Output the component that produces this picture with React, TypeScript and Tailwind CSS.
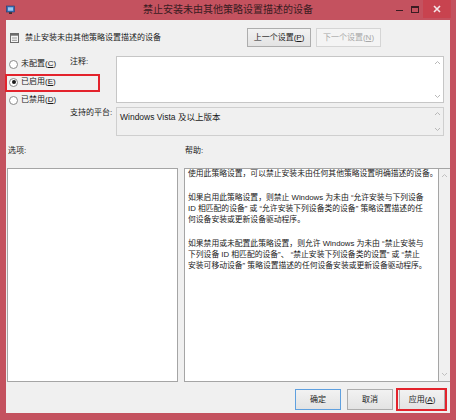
import React from "react";

const FONT = { fontFamily: '"Liberation Sans", "Noto Sans CJK SC", sans-serif' };

const helpLines = [
  "使用此策略设置，可以禁止安装未由任何其他策略设置明确描述的设备。",
  "",
  "如果启用此策略设置，则禁止 Windows 为未由 “允许安装与下列设备",
  "ID 相匹配的设备” 或 “允许安装下列设备类的设备” 策略设置描述的任",
  "何设备安装或更新设备驱动程序。",
  "",
  "如果禁用或未配置此策略设置，则允许 Windows 为未由 “禁止安装与",
  "下列设备 ID 相匹配的设备”、 “禁止安装下列设备类的设置” 或 “禁止",
  "安装可移动设备” 策略设置描述的任何设备安装或更新设备驱动程序。",
];

function Radio({ label, checked }: { label: React.ReactNode; checked?: boolean }) {
  return (
    <div className="flex items-center gap-[3px] h-[18px]">
      <span className="w-[9px] h-[9px] rounded-full border border-[#8a8a8a] bg-white flex items-center justify-center">
        {checked && <span className="w-[4px] h-[4px] rounded-full bg-[#1a1a1a]" />}
      </span>
      <span>{label}</span>
    </div>
  );
}

function ScrollArrows() {
  return (
    <div className="flex flex-col justify-between items-center w-[12px] py-[3px] text-[#b8b8b8]">
      <svg width="7" height="5" viewBox="0 0 7 5">
        <path d="M1 4 L3.5 1.5 L6 4" fill="none" stroke="currentColor" strokeWidth="1" />
      </svg>
      <svg width="7" height="5" viewBox="0 0 7 5">
        <path d="M1 1 L3.5 3.5 L6 1" fill="none" stroke="currentColor" strokeWidth="1" />
      </svg>
    </div>
  );
}

function Btn({
  children,
  disabled,
  primary,
  w,
  h = "h-[20px]",
}: {
  children: React.ReactNode;
  disabled?: boolean;
  primary?: boolean;
  w: string;
  h?: string;
}) {
  return (
    <div
      className={`${w} ${h} flex items-center justify-center border bg-gradient-to-b from-[#f2f2f2] to-[#e3e3e3] ${
        primary ? "border-[#5fa0df]" : disabled ? "border-[#d5d5d5] from-[#f4f4f4] to-[#f4f4f4]" : "border-[#adadad]"
      } ${disabled ? "text-[#a8a8a8]" : "text-[#1a1a1a]"}`}
    >
      {children}
    </div>
  );
}

export default function App() {
  return (
    <div
      className="w-[456px] h-[420px] bg-[#c4525f] flex flex-col text-[8px] text-[#1a1a1a] overflow-hidden"
      style={FONT}
    >
      {/* title bar */}
      <div className="h-[20px] flex items-center relative">
        <svg className="ml-[6px]" width="10" height="10" viewBox="0 0 10 10">
          <rect x="0.5" y="1" width="8" height="6" fill="#3a6fb8" stroke="#1f3f70" strokeWidth="0.6" />
          <rect x="2" y="2.3" width="5" height="3.4" fill="#9cc7f0" />
          <rect x="3" y="7.3" width="3" height="1.6" fill="#2b2b2b" />
        </svg>
        <div className="absolute left-0 right-0 text-center text-[10px] text-[#3a1c22] leading-[20px]">
          禁止安装未由其他策略设置描述的设备
        </div>
        <div className="ml-auto flex items-center h-[18px] self-start relative">
          <div className="w-[16px] flex justify-center">
            <span className="block w-[7px] h-[1.5px] bg-[#3a1c22] mt-[3px]" />
          </div>
          <div className="w-[16px] flex justify-center">
            <span className="block w-[8px] h-[7px] border border-[#3a1c22] border-t-2" />
          </div>
          <div className="w-[28px] h-[18px] bg-[#c8434f] flex items-center justify-center mr-[5px]">
            <svg width="8" height="8" viewBox="0 0 8 8">
              <path d="M1 1 L7 7 M7 1 L1 7" stroke="#f5e6e8" strokeWidth="1.6" />
            </svg>
          </div>
        </div>
      </div>

      {/* client area */}
      <div className="ml-[6px] w-[444px] h-[393px] bg-[#f0f0f0] relative">
        {/* header row */}
        <div className="flex items-center pt-[8px] h-[27px]">
          <svg className="ml-[4px]" width="9" height="10" viewBox="0 0 9 10">
            <rect x="0.5" y="0.5" width="8" height="9" fill="#f4f4f4" stroke="#6b6b6b" />
            <rect x="0.5" y="0.5" width="8" height="2.2" fill="#6b6b6b" />
            <rect x="2" y="4.5" width="5" height="1" fill="#9a9a9a" />
            <rect x="2" y="6.8" width="5" height="1" fill="#9a9a9a" />
          </svg>
          <span className="ml-[6px]">禁止安装未由其他策略设置描述的设备</span>
          <div className="ml-auto mr-[69px] flex gap-[5px]">
            <Btn w="w-[64px]" h="h-[19px]">
              上一个设置(<u>P</u>)
            </Btn>
            <Btn w="w-[65px]" h="h-[19px]" disabled>
              下一个设置(<u>N</u>)
            </Btn>
          </div>
        </div>

        {/* state + comment + platform */}
        <div className="flex mt-[9px]">
          <div className="w-[64px] pl-[3px] flex flex-col -mt-[1px]">
            <Radio label={<>未配置(<u>C</u>)</>} />
            <Radio label={<>已启用(<u>E</u>)</>} checked />
            <Radio label={<>已禁用(<u>D</u>)</>} />
          </div>
          <div className="w-[46px] flex flex-col">
            <div className="h-[51px]">注释:</div>
            <div>支持的平台:</div>
          </div>
          <div className="w-[328px] flex flex-col gap-[4px]">
            <div className="h-[47px] bg-white border border-[#c6c6c6] flex justify-end">
              <ScrollArrows />
            </div>
            <div className="h-[29px] bg-[#f0f0f0] border border-[#cfcfcf] flex">
              <div className="flex-1 pl-[3px] pt-[3px] text-[8.5px]">Windows Vista 及以上版本</div>
              <ScrollArrows />
            </div>
          </div>
        </div>

        {/* section labels */}
        <div className="flex mt-[9px] h-[12px] items-center">
          <span className="ml-[2px] w-[177px]">选项:</span>
          <span>帮助:</span>
        </div>

        {/* options and help panes */}
        <div className="flex mt-[11px] gap-[6px] ml-[1px]">
          <div className="w-[171px] h-[214px] bg-white border border-[#a5a5a5]" />
          <div className="w-[266px] h-[214px] bg-white border border-[#a5a5a5] border-r-0 flex">
            <div className="flex-1 pl-[3px] -mt-[1px] leading-[11px] text-[7.8px] border-r border-[#a5a5a5]">
              {helpLines.map((l, i) => (
                <div key={i} className={`${l ? "h-[11px]" : "h-[13px]"} whitespace-nowrap`}>
                  {l}
                </div>
              ))}
            </div>
            <div className="w-[13px] bg-[#f0f0f0] flex flex-col justify-between items-center py-[4px] text-[#c0c0c0]">
              <svg width="7" height="5" viewBox="0 0 7 5">
                <path d="M1 4 L3.5 1.5 L6 4" fill="none" stroke="currentColor" />
              </svg>
              <svg width="7" height="5" viewBox="0 0 7 5">
                <path d="M1 1 L3.5 3.5 L6 1" fill="none" stroke="currentColor" />
              </svg>
            </div>
          </div>
        </div>

        {/* dialog buttons */}
        <div className="flex justify-end gap-[6px] mt-[7px] mr-[5px]">
          <Btn w="w-[46px]" h="h-[21px]" primary>
            确定
          </Btn>
          <Btn w="w-[46px]" h="h-[21px]">
            取消
          </Btn>
          <Btn w="w-[46px]" h="h-[21px]">
            应用(<u>A</u>)
          </Btn>
        </div>

        {/* red callouts */}
        <div className="absolute left-[-1px] top-[54px] w-[95px] h-[18px] border-2 border-[#e3232c]" />
        <div className="absolute left-[390px] top-[368px] w-[51px] h-[23px] border-2 border-[#e3232c]" />
      </div>
      <div className="flex-1" />
    </div>
  );
}
